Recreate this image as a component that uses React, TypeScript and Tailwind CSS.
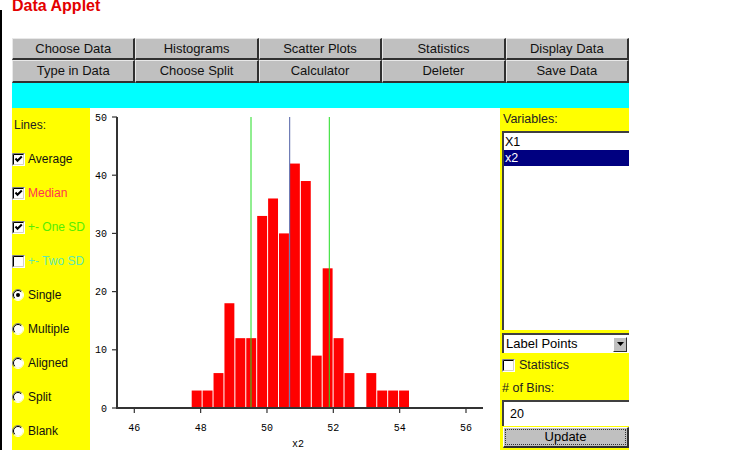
import React from "react";

const counts = [3, 3, 6, 18, 12, 12, 33, 36, 30, 42, 39, 9, 24, 12, 6, 0, 6, 3, 3, 3];

function Checkbox({ checked }: { checked: boolean }) {
  return (
    <svg width="13" height="13" viewBox="0 0 13 13" className="shrink-0">
      <rect x="0" y="0" width="13" height="13" fill="#ffffff" />
      <path d="M0.5 12.5 V0.5 H12.5" stroke="#808080" fill="none" />
      <path d="M1.5 11.5 V1.5 H11.5" stroke="#000000" fill="none" />
      <path d="M1.5 12.5 H12.5 V1" stroke="#ffffff" fill="none" />
      <path d="M2 11.5 H11.5 V2" stroke="#d4d0c8" fill="none" />
      {checked && <path d="M3.5 5.5 L5.5 7.8 L9.8 3.5" stroke="#000" strokeWidth="2" fill="none" />}
    </svg>
  );
}

function Radio({ checked }: { checked: boolean }) {
  return (
    <svg width="12" height="12" viewBox="0 0 12 12" className="shrink-0">
      <circle cx="6" cy="6" r="5" fill="#ffffff" />
      <path d="M2.11 9.89 A5.5 5.5 0 0 1 9.89 2.11" stroke="#808080" fill="none" />
      <path d="M2.8 9.2 A4.5 4.5 0 0 1 9.2 2.8" stroke="#000000" fill="none" />
      <path d="M9.89 2.11 A5.5 5.5 0 0 1 2.11 9.89" stroke="#ffffff" fill="none" />
      {checked && <circle cx="6" cy="6" r="2" fill="#000" />}
    </svg>
  );
}

function Plot() {
  const y = (v: number) => 300 - v * 5.82;
  const x = (v: number) => 44.3 + (v - 46) * 33.17;
  const x0 = 101.7;
  const bw = 10.915;
  const mono = { fontFamily: "'Liberation Mono', 'DejaVu Sans Mono', monospace" };
  return (
    <svg width="410" height="342" viewBox="0 0 410 342">
      {counts.map((c, i) =>
        c > 0 ? (
          <rect key={i} x={x0 + i * bw} y={y(c)} width={bw - 1} height={300 - y(c)} fill="#ff0000" />
        ) : null
      )}
      <line x1="161" y1="9" x2="161" y2="300" stroke="#22dd22" strokeWidth="1" />
      <line x1="199.7" y1="9" x2="199.7" y2="300" stroke="#4f5fa5" strokeWidth="1" />
      <line x1="239.3" y1="9" x2="239.3" y2="300" stroke="#22dd22" strokeWidth="1" />
      <line x1="27" y1="9" x2="27" y2="301" stroke="#333" strokeWidth="2" />
      <line x1="26" y1="300" x2="393" y2="300" stroke="#333" strokeWidth="2" />
      {[0, 10, 20, 30, 40, 50].map((v) => (
        <g key={v}>
          <line x1="22" y1={y(v)} x2="27" y2={y(v)} stroke="#333" strokeWidth="1.2" />
          <text x="17" y={y(v) + 3.5} fontSize="10" textAnchor="end" fill="#000" style={mono}>
            {v}
          </text>
        </g>
      ))}
      {[46, 48, 50, 52, 54, 56].map((v) => (
        <g key={v}>
          <line x1={x(v)} y1="300" x2={x(v)} y2="305" stroke="#333" strokeWidth="1.2" />
          <text x={x(v)} y="322.5" fontSize="10" textAnchor="middle" fill="#000" style={mono}>
            {v}
          </text>
        </g>
      ))}
      <text x="208" y="338.5" fontSize="10" textAnchor="middle" fill="#000" style={mono}>
        x2
      </text>
    </svg>
  );
}

const row1 = ["Choose Data", "Histograms", "Scatter Plots", "Statistics", "Display Data"];
const row2 = ["Type in Data", "Choose Split", "Calculator", "Deleter", "Save Data"];

export default function App() {
  return (
    <div
      className="w-[750px] h-[450px] bg-white overflow-hidden flex"
      style={{ fontFamily: "'Liberation Sans', Arial, sans-serif" }}
    >
      <div className="w-[2px] bg-black mt-[10px] shrink-0" />
      <div className="pl-[10px] flex flex-col">
        <div className="h-[38px]">
          <div className="text-[16px] font-bold text-[#e30000] leading-none -mt-[2px]">Data Applet</div>
        </div>
        <div className="grid grid-cols-5 grid-rows-[22px_23px] w-[617px]">
          {[...row1, ...row2].map((l) => (
            <div
              key={l}
              className="flex items-center justify-center bg-[#c0c0c0] border-t border-l border-t-[#e8e8e8] border-l-[#e8e8e8] border-r-2 border-b-2 border-r-[#303030] border-b-[#303030] text-[13px] text-[#111]"
            >
              {l}
            </div>
          ))}
        </div>
        <div className="w-[617px] h-[25px] bg-[#00ffff]" />
        <div className="flex h-[342px] w-[617px]">
          <div className="w-[78px] bg-[#ffff00] flex flex-col text-[12px] shrink-0 overflow-hidden whitespace-nowrap">
            <div className="h-[34px] flex items-center pl-[2px] text-[#222]">Lines:</div>
            <div className="h-[34px] flex items-center gap-[3px]">
              <Checkbox checked />
              <span className="text-[#111]">Average</span>
            </div>
            <div className="h-[34px] flex items-center gap-[3px]">
              <Checkbox checked />
              <span className="text-[#ff3355]">Median</span>
            </div>
            <div className="h-[34px] flex items-center gap-[3px]">
              <Checkbox checked />
              <span className="text-[#55ee00]">+- One SD</span>
            </div>
            <div className="h-[34px] flex items-center gap-[3px]">
              <Checkbox checked={false} />
              <span className="text-[#5fe8b0]">+- Two SD</span>
            </div>
            {["Single", "Multiple", "Aligned", "Split", "Blank"].map((l, i) => (
              <div key={l} className="h-[34px] flex items-center gap-[4px]">
                <Radio checked={i === 0} />
                <span className="text-[#111]">{l}</span>
              </div>
            ))}
          </div>
          <div className="w-[410px] shrink-0">
            <Plot />
          </div>
          <div className="w-[129px] bg-[#ffff00] flex flex-col text-[12.5px] shrink-0">
            <div className="h-[23px] flex items-center pl-[3px] text-[#222]">Variables:</div>
            <div className="ml-[2px] h-[199px] bg-white border-t-2 border-l-2 border-t-[#404040] border-l-[#404040] pt-[1px]">
              <div className="h-[16px] flex items-center pl-[1px] text-black">X1</div>
              <div className="h-[16px] flex items-center pl-[1px] bg-[#000080] text-white">x2</div>
            </div>
            <div className="h-[3px]" />
            <div className="ml-[2px] h-[20px] bg-white border-t-2 border-l-2 border-t-[#404040] border-l-[#404040] flex items-center justify-between pl-[2px] pr-[2px]">
              <span className="text-black text-[13px]">Label Points</span>
              <div className="w-[14px] h-[15px] bg-[#c0c0c0] border-t border-l border-t-white border-l-white border-r border-b border-r-[#303030] border-b-[#303030] flex items-center justify-center">
                <svg width="7" height="4" viewBox="0 0 7 4">
                  <path d="M0 0 H7 L3.5 4 Z" fill="#000" />
                </svg>
              </div>
            </div>
            <div className="h-[47px] flex flex-col">
              <div className="h-[24px] flex items-center gap-[4px] pl-[2px] pt-[1px]">
                <Checkbox checked={false} />
                <span className="text-[#222]">Statistics</span>
              </div>
              <div className="h-[23px] flex items-center pl-[2px] text-[#222]">
                # of Bins:
              </div>
            </div>
            <div className="ml-[2px] h-[26px] bg-white border-t-2 border-l-2 border-t-[#404040] border-l-[#404040] flex items-center pl-[6px] text-black">
              20
            </div>
            <div className="h-[1px]" />
            <div className="ml-[3px] h-[21px] bg-[#c0c0c0] border-t border-l border-t-white border-l-white border-r-2 border-b-2 border-r-[#303030] border-b-[#303030] p-[1px]">
              <div className="h-full border border-dotted border-[#333] flex items-center justify-center text-black text-[13px]">
                Update
              </div>
            </div>
          </div>
        </div>
      </div>
    </div>
  );
}
